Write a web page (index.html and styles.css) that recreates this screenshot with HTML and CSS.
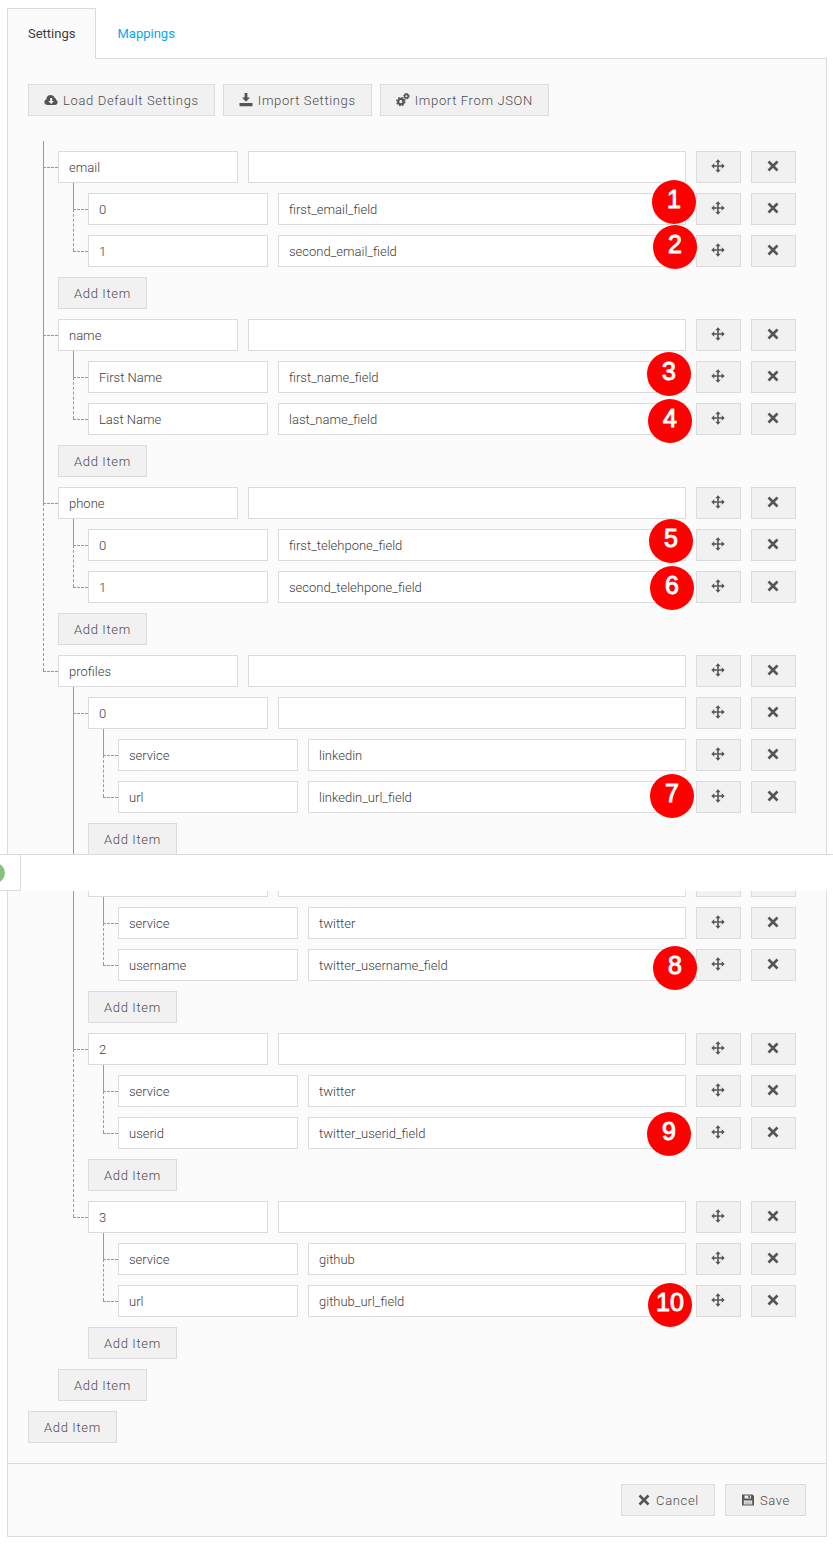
FILE: index.html
```html
<!DOCTYPE html>
<html lang="en">
<head>
<meta charset="utf-8">
<meta name="viewport" content="width=device-width, initial-scale=1">
<title>Settings</title>
<link rel="stylesheet" href="styles.css">
</head>
<body>
<svg class="sprite" aria-hidden="true">
  <symbol id="i-move" viewBox="0 0 14 14"><path d="M7 .3 9.700 3.300H7.800v2.900h2.900V4.300L13.700 7l-3 2.700V7.800H7.800v2.900h1.900L7 13.700 4.300 10.700h1.900V7.800H3.300v1.900L.3 7l3-2.700v1.900h2.900V3.300H4.300z"/></symbol>
  <symbol id="i-x" viewBox="0 0 14 14"><path d="M2.500 2.500l9 9M11.500 2.500l-9 9" fill="none" stroke="currentColor" stroke-width="2.600"/></symbol>
  <symbol id="i-cloud" viewBox="0 0 14 14"><path fill-rule="evenodd" d="M4 12C1.700 12 .4 10.700.4 9c0-1.300.8-2.400 2-2.800C2.400 3.700 4 2 6.500 2c2 0 3.500 1.100 4 2.700 1 .2 1.700 1 1.500 2.100 1 .4 1.600 1.300 1.600 2.400 0 1.600-1.200 2.800-2.800 2.800zM6.200 5v3H4.300L7.200 11.100 10.100 8H8.200V5z"/></symbol>
  <symbol id="i-download" viewBox="0 0 14 14"><path d="M5.600 0h2.800v4.500H11L7 8.800 3 4.500h2.600zM.5 10h13v3.300H.5z"/></symbol>
  <symbol id="i-cogs" viewBox="0 0 14 14"><g fill="none" stroke="currentColor"><circle cx="4.800" cy="8.600" r="2.700" stroke-width="2.200"/><circle cx="4.800" cy="8.600" r="4.100" stroke-width="1.300" stroke-dasharray="1.700 1.520"/><circle cx="10.400" cy="3.200" r="1.800" stroke-width="1.600"/><circle cx="10.400" cy="3.200" r="2.800" stroke-width="1" stroke-dasharray="1.200 .999"/></g></symbol>
  <symbol id="i-save" viewBox="0 0 14 14"><path fill-rule="evenodd" d="M1 1.500h10.500L13 3v9.500H1zM3.500 2.500v3h6.500v-3zM2.800 7.500v4h8.400v-4z"/><path d="M7.300 2.500h1.700v2.500H7.300z"/><path d="M3.500 8.500h7v3h-7z" opacity=".3"/></symbol>
</svg>

<main class="page">
  <nav class="tabs">
    <a class="tab tab-active" href="#settings" aria-current="page">Settings</a>
    <a class="tab" href="#mappings">Mappings</a>
  </nav>

  <form class="panel" id="settings">
    <div class="panel-body">
      <div class="toolbar">
        <button type="button" class="btn"><svg class="icon"><use href="#i-cloud"/></svg>Load Default Settings</button>
        <button type="button" class="btn"><svg class="icon"><use href="#i-download"/></svg>Import Settings</button>
        <button type="button" class="btn"><svg class="icon"><use href="#i-cogs"/></svg>Import From JSON</button>
      </div>

      <div class="tree">
        <ul class="nodes">
          <li class="node">
            <div class="row"><input class="field key" aria-label="Key" value="email"><input class="field value" aria-label="Value"><button type="button" class="btn tool" aria-label="Move"><svg class="icon"><use href="#i-move"/></svg></button><button type="button" class="btn tool" aria-label="Remove"><svg class="icon"><use href="#i-x"/></svg></button></div>
            <ul class="nodes">
              <li class="node">
                <div class="row"><input class="field key" aria-label="Key" value="0"><input class="field value" aria-label="Value" value="first_email_field"><button type="button" class="btn tool" aria-label="Move"><svg class="icon"><use href="#i-move"/></svg></button><button type="button" class="btn tool" aria-label="Remove"><svg class="icon"><use href="#i-x"/></svg></button></div>
              </li>
              <li class="node">
                <div class="row"><input class="field key" aria-label="Key" value="1"><input class="field value" aria-label="Value" value="second_email_field"><button type="button" class="btn tool" aria-label="Move"><svg class="icon"><use href="#i-move"/></svg></button><button type="button" class="btn tool" aria-label="Remove"><svg class="icon"><use href="#i-x"/></svg></button></div>
              </li>
            </ul>
            <button type="button" class="btn">Add Item</button>
          </li>
          <li class="node">
            <div class="row"><input class="field key" aria-label="Key" value="name"><input class="field value" aria-label="Value"><button type="button" class="btn tool" aria-label="Move"><svg class="icon"><use href="#i-move"/></svg></button><button type="button" class="btn tool" aria-label="Remove"><svg class="icon"><use href="#i-x"/></svg></button></div>
            <ul class="nodes">
              <li class="node">
                <div class="row"><input class="field key" aria-label="Key" value="First Name"><input class="field value" aria-label="Value" value="first_name_field"><button type="button" class="btn tool" aria-label="Move"><svg class="icon"><use href="#i-move"/></svg></button><button type="button" class="btn tool" aria-label="Remove"><svg class="icon"><use href="#i-x"/></svg></button></div>
              </li>
              <li class="node">
                <div class="row"><input class="field key" aria-label="Key" value="Last Name"><input class="field value" aria-label="Value" value="last_name_field"><button type="button" class="btn tool" aria-label="Move"><svg class="icon"><use href="#i-move"/></svg></button><button type="button" class="btn tool" aria-label="Remove"><svg class="icon"><use href="#i-x"/></svg></button></div>
              </li>
            </ul>
            <button type="button" class="btn">Add Item</button>
          </li>
          <li class="node">
            <div class="row"><input class="field key" aria-label="Key" value="phone"><input class="field value" aria-label="Value"><button type="button" class="btn tool" aria-label="Move"><svg class="icon"><use href="#i-move"/></svg></button><button type="button" class="btn tool" aria-label="Remove"><svg class="icon"><use href="#i-x"/></svg></button></div>
            <ul class="nodes">
              <li class="node">
                <div class="row"><input class="field key" aria-label="Key" value="0"><input class="field value" aria-label="Value" value="first_telehpone_field"><button type="button" class="btn tool" aria-label="Move"><svg class="icon"><use href="#i-move"/></svg></button><button type="button" class="btn tool" aria-label="Remove"><svg class="icon"><use href="#i-x"/></svg></button></div>
              </li>
              <li class="node">
                <div class="row"><input class="field key" aria-label="Key" value="1"><input class="field value" aria-label="Value" value="second_telehpone_field"><button type="button" class="btn tool" aria-label="Move"><svg class="icon"><use href="#i-move"/></svg></button><button type="button" class="btn tool" aria-label="Remove"><svg class="icon"><use href="#i-x"/></svg></button></div>
              </li>
            </ul>
            <button type="button" class="btn">Add Item</button>
          </li>
          <li class="node">
            <div class="row"><input class="field key" aria-label="Key" value="profiles"><input class="field value" aria-label="Value"><button type="button" class="btn tool" aria-label="Move"><svg class="icon"><use href="#i-move"/></svg></button><button type="button" class="btn tool" aria-label="Remove"><svg class="icon"><use href="#i-x"/></svg></button></div>
            <ul class="nodes">
              <li class="node">
                <div class="row"><input class="field key" aria-label="Key" value="0"><input class="field value" aria-label="Value"><button type="button" class="btn tool" aria-label="Move"><svg class="icon"><use href="#i-move"/></svg></button><button type="button" class="btn tool" aria-label="Remove"><svg class="icon"><use href="#i-x"/></svg></button></div>
                <ul class="nodes">
                  <li class="node">
                    <div class="row"><input class="field key" aria-label="Key" value="service"><input class="field value" aria-label="Value" value="linkedin"><button type="button" class="btn tool" aria-label="Move"><svg class="icon"><use href="#i-move"/></svg></button><button type="button" class="btn tool" aria-label="Remove"><svg class="icon"><use href="#i-x"/></svg></button></div>
                  </li>
                  <li class="node">
                    <div class="row"><input class="field key" aria-label="Key" value="url"><input class="field value" aria-label="Value" value="linkedin_url_field"><button type="button" class="btn tool" aria-label="Move"><svg class="icon"><use href="#i-move"/></svg></button><button type="button" class="btn tool" aria-label="Remove"><svg class="icon"><use href="#i-x"/></svg></button></div>
                  </li>
                </ul>
                <button type="button" class="btn">Add Item</button>
              </li>
              <li class="node">
                <div class="row"><input class="field key" aria-label="Key"><input class="field value" aria-label="Value"><button type="button" class="btn tool" aria-label="Move"></button><button type="button" class="btn tool" aria-label="Remove"></button></div>
                <ul class="nodes">
                  <li class="node">
                    <div class="row"><input class="field key" aria-label="Key" value="service"><input class="field value" aria-label="Value" value="twitter"><button type="button" class="btn tool" aria-label="Move"><svg class="icon"><use href="#i-move"/></svg></button><button type="button" class="btn tool" aria-label="Remove"><svg class="icon"><use href="#i-x"/></svg></button></div>
                  </li>
                  <li class="node">
                    <div class="row"><input class="field key" aria-label="Key" value="username"><input class="field value" aria-label="Value" value="twitter_username_field"><button type="button" class="btn tool" aria-label="Move"><svg class="icon"><use href="#i-move"/></svg></button><button type="button" class="btn tool" aria-label="Remove"><svg class="icon"><use href="#i-x"/></svg></button></div>
                  </li>
                </ul>
                <button type="button" class="btn">Add Item</button>
              </li>
              <li class="node">
                <div class="row"><input class="field key" aria-label="Key" value="2"><input class="field value" aria-label="Value"><button type="button" class="btn tool" aria-label="Move"><svg class="icon"><use href="#i-move"/></svg></button><button type="button" class="btn tool" aria-label="Remove"><svg class="icon"><use href="#i-x"/></svg></button></div>
                <ul class="nodes">
                  <li class="node">
                    <div class="row"><input class="field key" aria-label="Key" value="service"><input class="field value" aria-label="Value" value="twitter"><button type="button" class="btn tool" aria-label="Move"><svg class="icon"><use href="#i-move"/></svg></button><button type="button" class="btn tool" aria-label="Remove"><svg class="icon"><use href="#i-x"/></svg></button></div>
                  </li>
                  <li class="node">
                    <div class="row"><input class="field key" aria-label="Key" value="userid"><input class="field value" aria-label="Value" value="twitter_userid_field"><button type="button" class="btn tool" aria-label="Move"><svg class="icon"><use href="#i-move"/></svg></button><button type="button" class="btn tool" aria-label="Remove"><svg class="icon"><use href="#i-x"/></svg></button></div>
                  </li>
                </ul>
                <button type="button" class="btn">Add Item</button>
              </li>
              <li class="node">
                <div class="row"><input class="field key" aria-label="Key" value="3"><input class="field value" aria-label="Value"><button type="button" class="btn tool" aria-label="Move"><svg class="icon"><use href="#i-move"/></svg></button><button type="button" class="btn tool" aria-label="Remove"><svg class="icon"><use href="#i-x"/></svg></button></div>
                <ul class="nodes">
                  <li class="node">
                    <div class="row"><input class="field key" aria-label="Key" value="service"><input class="field value" aria-label="Value" value="github"><button type="button" class="btn tool" aria-label="Move"><svg class="icon"><use href="#i-move"/></svg></button><button type="button" class="btn tool" aria-label="Remove"><svg class="icon"><use href="#i-x"/></svg></button></div>
                  </li>
                  <li class="node">
                    <div class="row"><input class="field key" aria-label="Key" value="url"><input class="field value" aria-label="Value" value="github_url_field"><button type="button" class="btn tool" aria-label="Move"><svg class="icon"><use href="#i-move"/></svg></button><button type="button" class="btn tool" aria-label="Remove"><svg class="icon"><use href="#i-x"/></svg></button></div>
                  </li>
                </ul>
                <button type="button" class="btn">Add Item</button>
              </li>
            </ul>
            <button type="button" class="btn">Add Item</button>
          </li>
        </ul>
        <button type="button" class="btn">Add Item</button>
      </div>
    </div>

    <div class="panel-footer">
      <button type="button" class="btn"><svg class="icon"><use href="#i-x"/></svg>Cancel</button>
      <button type="submit" class="btn"><svg class="icon"><use href="#i-save"/></svg>Save</button>
    </div>
  </form>

  <div class="strip"><div class="strip-handle"><span class="status-dot"></span></div></div>

  <div class="pins">
    <span class="pin pin-1">1</span>
    <span class="pin pin-2">2</span>
    <span class="pin pin-3">3</span>
    <span class="pin pin-4">4</span>
    <span class="pin pin-5">5</span>
    <span class="pin pin-6">6</span>
    <span class="pin pin-7">7</span>
    <span class="pin pin-8">8</span>
    <span class="pin pin-9">9</span>
    <span class="pin pin-10">10</span>
  </div>
</main>
</body>
</html>
```

FILE: styles.css
```css
* { box-sizing: border-box; }

body {
  margin: 0;
  background: #fff;
  color: #55565a;
  font: 300 13px/20px Roboto, "Liberation Sans", sans-serif;
}

.sprite { position: absolute; width: 0; height: 0; }

.page {
  position: relative;
  padding: 8px 6px 10px 7px;
  overflow: hidden;
}

/* Tabs */
.tabs { display: flex; }

.tab {
  height: 50px;
  padding: 16px 21px;
  color: #00a9f4;
  font-weight: 400;
  text-decoration: none;
}

.tab-active {
  position: relative;
  z-index: 1;
  height: 51px;
  margin-bottom: -1px;
  padding: 15px 20px;
  border: 1px solid #dbdbdb;
  border-bottom: 0;
  background: #fbfbfb;
  color: #3c3c3c;
}

/* Panel */
.panel {
  border: 1px solid #dbdbdb;
  background: #fbfbfb;
}

.panel-body {
  display: flex;
  flex-direction: column;
  gap: 35px;
  padding: 25px 20px 20px;
}

.toolbar { display: flex; gap: 8px; }

.panel-footer {
  display: flex;
  justify-content: flex-end;
  gap: 10px;
  padding: 20px;
  border-top: 1px solid #dbdbdb;
}

/* Controls */
.btn {
  display: inline-flex;
  align-items: center;
  justify-content: center;
  height: 32px;
  padding: 2px 15px 0;
  border: 1px solid #dbdbdb;
  border-radius: 0;
  background: #f1f1f1;
  color: #4c4c4c;
  font: inherit;
  letter-spacing: .05em;
  white-space: nowrap;
}

.icon {
  width: 14px;
  height: 14px;
  margin: 0 5px 2px 0;
  color: #555;
  fill: currentColor;
}

.tool { flex: none; width: 45px; padding: 0 1px 2px 0; }
.tool .icon { margin: 0; }

.field {
  height: 32px;
  min-width: 0;
  padding: 0 10px;
  border: 1px solid #dbdbdb;
  border-radius: 0;
  background: #fff;
  color: #3c3c3c;
  font: inherit;
}

.key { flex: none; width: 180px; }
.value { flex: 1; }

/* Tree */
.tree, .node {
  display: flex;
  flex-direction: column;
  align-items: flex-start;
  gap: 10px;
}

.tree { padding-right: 10px; }

.nodes {
  position: relative;
  display: flex;
  flex-direction: column;
  align-self: stretch;
  gap: 10px;
  margin: 0 0 0 30px;
  padding: 0;
  list-style: none;
}

.node { position: relative; }
.row { display: flex; align-self: stretch; gap: 10px; }

.nodes::before,
.node::before,
.node:not(:last-child)::after {
  position: absolute;
  left: -15px;
  content: "";
}

.nodes::before {
  top: -10px;
  height: 26px;
  border-left: 1px solid #62b0b0;
}

.node::before {
  top: 16px;
  width: 15px;
  border-top: 1px dashed #62b0b0;
}

.node:not(:last-child)::after {
  top: 16px;
  bottom: -26px;
  border-left: 1px solid #62b0b0;
}

.node:nth-last-child(2)::after { border-left-style: dashed; }

/* Strip lying across the page */
.strip {
  position: absolute;
  top: 854px;
  right: 0;
  left: 0;
  height: 37px;
  border-top: 1px solid #dbdbdb;
  background: #fff;
}

.strip-handle {
  display: flex;
  align-items: center;
  width: 21px;
  height: 36px;
  border: solid #dbdbdb;
  border-width: 0 1px 1px 0;
}

.status-dot {
  width: 20px;
  height: 20px;
  margin-left: -15px;
  border-radius: 50%;
  background: #87c17f;
}

/* Numbered pins */
.pin {
  position: absolute;
  width: 44px;
  height: 44px;
  border-radius: 50%;
  background: #f00;
  color: #fff;
  font: 25px/39px "Liberation Sans", Arial, sans-serif;
  -webkit-text-stroke: 1px #fff;
  text-align: center;
}

.pin-1 { top: 180px; right: 137px; }
.pin-2 { top: 225px; right: 136px; }
.pin-3 { top: 352px; right: 142px; }
.pin-4 { top: 399px; right: 141px; }
.pin-5 { top: 519px; right: 140px; }
.pin-6 { top: 566px; right: 139px; }
.pin-7 { top: 774px; right: 139px; }
.pin-8 { top: 946px; right: 136px; }
.pin-9 { top: 1112px; right: 142px; }
.pin-10 { top: 1283px; right: 141px; }
```
